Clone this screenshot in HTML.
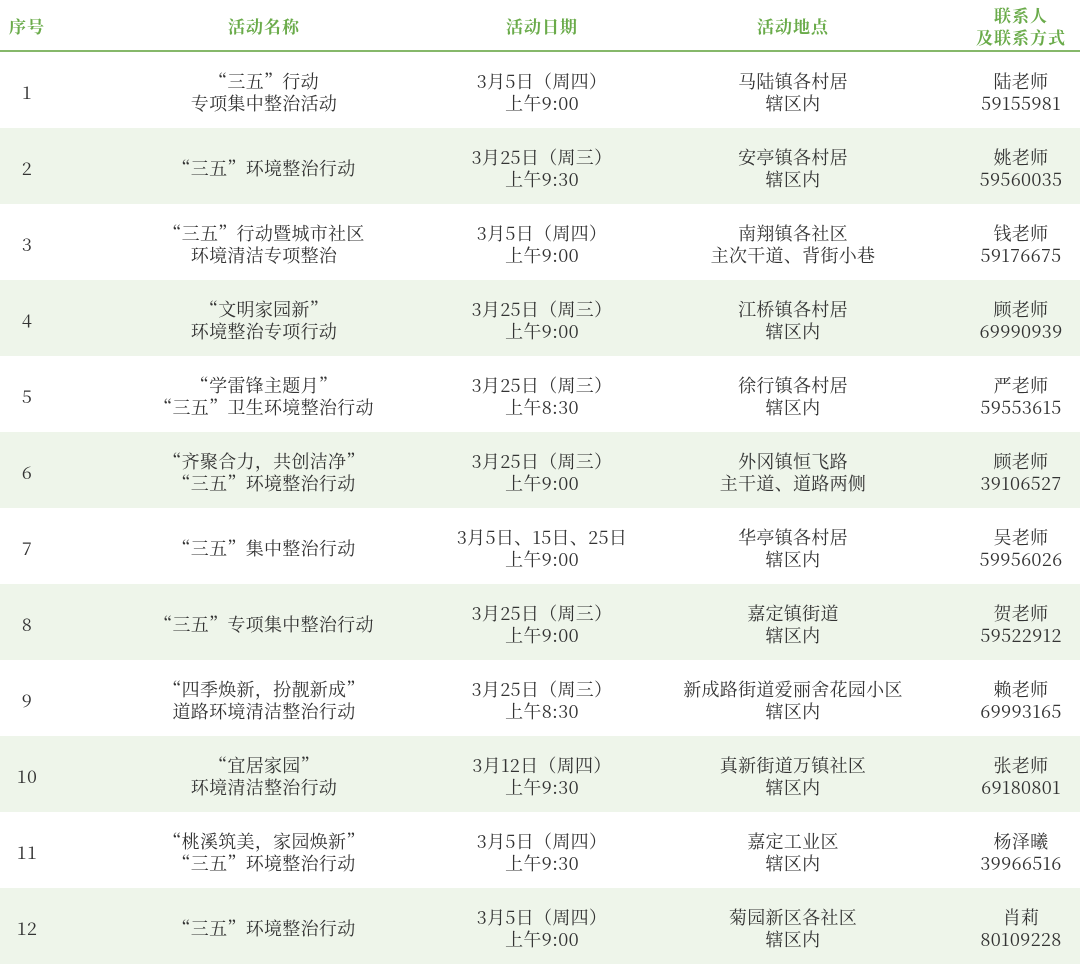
<!DOCTYPE html>
<html><head><meta charset="utf-8"><style>
*{margin:0;padding:0;box-sizing:border-box}
body{width:1080px;height:960px;overflow:hidden;background:#fff;font-family:"Noto Serif CJK SC","Liberation Serif",serif;color:#333;}
.hd{height:52px;position:relative;border-bottom:2px solid #86b86a;}
.hd div{position:absolute;top:0;height:52px;display:flex;align-items:center;justify-content:center;text-align:center;color:#6aab4a;font-weight:bold;font-size:17px;line-height:22px;letter-spacing:1px;}
.row{height:76px;position:relative;font-size:18px;line-height:22px;letter-spacing:0.3px;}
.row:nth-child(even){background:#eef5ea;}
.row div{position:absolute;top:2px;height:76px;display:flex;align-items:center;justify-content:center;text-align:center;}
.c1{left:0;width:54px}.c2{left:134px;width:260px}.c3{left:420px;width:244px}.c4{left:660px;width:266px}.c5{left:964px;width:114px}
</style></head><body>
<div class="hd"><div class="c1">序号</div><div class="c2">活动名称</div><div class="c3">活动日期</div><div class="c4">活动地点</div><div class="c5">联系人<br>及联系方式</div></div>
<div id="t">
<div class="row"><div class="c1">1</div><div class="c2">“三五”行动<br>专项集中整治活动</div><div class="c3">3月5日（周四）<br>上午9:00</div><div class="c4">马陆镇各村居<br>辖区内</div><div class="c5">陆老师<br>59155981</div></div>
<div class="row"><div class="c1">2</div><div class="c2">“三五”环境整治行动</div><div class="c3">3月25日（周三）<br>上午9:30</div><div class="c4">安亭镇各村居<br>辖区内</div><div class="c5">姚老师<br>59560035</div></div>
<div class="row"><div class="c1">3</div><div class="c2">“三五”行动暨城市社区<br>环境清洁专项整治</div><div class="c3">3月5日（周四）<br>上午9:00</div><div class="c4">南翔镇各社区<br>主次干道、背街小巷</div><div class="c5">钱老师<br>59176675</div></div>
<div class="row"><div class="c1">4</div><div class="c2">“文明家园新”<br>环境整治专项行动</div><div class="c3">3月25日（周三）<br>上午9:00</div><div class="c4">江桥镇各村居<br>辖区内</div><div class="c5">顾老师<br>69990939</div></div>
<div class="row"><div class="c1">5</div><div class="c2">“学雷锋主题月”<br>“三五”卫生环境整治行动</div><div class="c3">3月25日（周三）<br>上午8:30</div><div class="c4">徐行镇各村居<br>辖区内</div><div class="c5">严老师<br>59553615</div></div>
<div class="row"><div class="c1">6</div><div class="c2">“齐聚合力，共创洁净”<br>“三五”环境整治行动</div><div class="c3">3月25日（周三）<br>上午9:00</div><div class="c4">外冈镇恒飞路<br>主干道、道路两侧</div><div class="c5">顾老师<br>39106527</div></div>
<div class="row"><div class="c1">7</div><div class="c2">“三五”集中整治行动</div><div class="c3">3月5日、15日、25日<br>上午9:00</div><div class="c4">华亭镇各村居<br>辖区内</div><div class="c5">吴老师<br>59956026</div></div>
<div class="row"><div class="c1">8</div><div class="c2">“三五”专项集中整治行动</div><div class="c3">3月25日（周三）<br>上午9:00</div><div class="c4">嘉定镇街道<br>辖区内</div><div class="c5">贺老师<br>59522912</div></div>
<div class="row"><div class="c1">9</div><div class="c2">“四季焕新，扮靓新成”<br>道路环境清洁整治行动</div><div class="c3">3月25日（周三）<br>上午8:30</div><div class="c4">新成路街道爱丽舍花园小区<br>辖区内</div><div class="c5">赖老师<br>69993165</div></div>
<div class="row"><div class="c1">10</div><div class="c2">“宜居家园”<br>环境清洁整治行动</div><div class="c3">3月12日（周四）<br>上午9:30</div><div class="c4">真新街道万镇社区<br>辖区内</div><div class="c5">张老师<br>69180801</div></div>
<div class="row"><div class="c1">11</div><div class="c2">“桃溪筑美，家园焕新”<br>“三五”环境整治行动</div><div class="c3">3月5日（周四）<br>上午9:30</div><div class="c4">嘉定工业区<br>辖区内</div><div class="c5">杨泽曦<br>39966516</div></div>
<div class="row"><div class="c1">12</div><div class="c2">“三五”环境整治行动</div><div class="c3">3月5日（周四）<br>上午9:00</div><div class="c4">菊园新区各社区<br>辖区内</div><div class="c5">肖莉<br>80109228</div></div>
</div>
</body></html>
